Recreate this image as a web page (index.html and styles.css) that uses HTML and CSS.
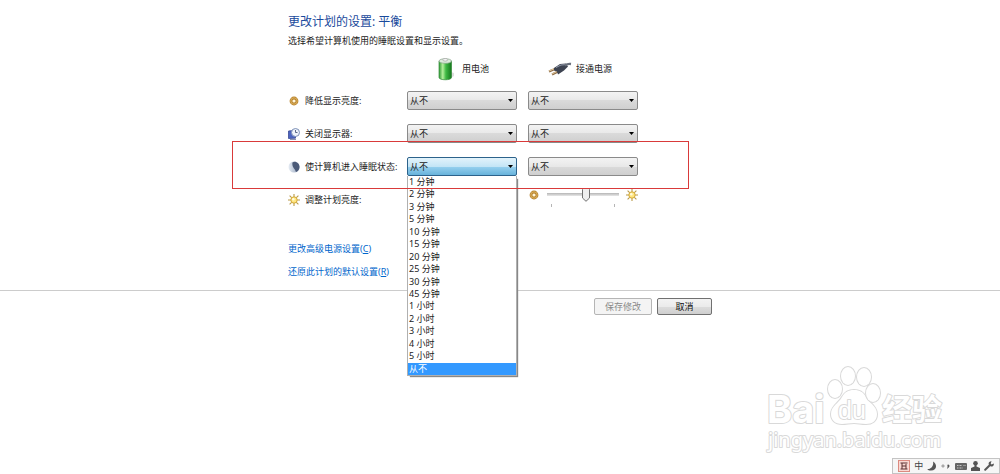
FILE: index.html
```html
<!DOCTYPE html>
<html lang="zh-CN">
<head>
	<meta charset="utf-8">
	<meta name="viewport" content="width=device-width, initial-scale=1">
	<title>更改计划的设置</title>
	<link rel="stylesheet" href="styles.css">
</head>
<body>
	<!--公用图标-->
	<svg class="defs" aria-hidden="true">
		<defs>
			<linearGradient id="green" x1="0" x2="1">
				<stop offset="0" stop-color="#2f9a35"/>
				<stop offset=".3" stop-color="#b4f09c"/>
				<stop offset=".55" stop-color="#3fb944"/>
				<stop offset="1" stop-color="#14761c"/>
			</linearGradient>
			<linearGradient id="moonFill" x1="0" x2="1">
				<stop offset="0" stop-color="#e6ecf4"/>
				<stop offset="1" stop-color="#93a3bb"/>
			</linearGradient>
			<symbol id="dim" viewBox="0 0 10 10">
				<circle cx="5" cy="5" r="3" fill="#fff6da" stroke="#b8842f" stroke-width="2.8"/>
				<circle cx="5" cy="5" r="3.2" fill="none" stroke="#e5bb68" stroke-width=".8"/>
			</symbol>
			<symbol id="sun" viewBox="0 0 12 12">
				<path d="M6 0v12M0 6h12M1.6 1.6l8.8 8.8M10.4 1.6l-8.8 8.8" stroke="#b99a48" stroke-width="1.1"/>
				<circle cx="6" cy="6" r="3.2" fill="#ffe680" stroke="#d3a93b"/>
				<circle cx="5.3" cy="5.3" r="1.2" fill="#fffbe0"/>
			</symbol>
		</defs>
	</svg>

	<main class="content">
		<h1>更改计划的设置: 平衡</h1>
		<p class="intro">选择希望计算机使用的睡眠设置和显示设置。</p>

		<div class="row head">
			<div class="source battery">
				<svg width="18" height="24" viewBox="0 0 18 24">
					<path d="M12 22l5-3v-3l-3-1z" fill="#ddd"/>
					<path d="M2 4v16.500c0 3 12.500 3 12.500 0V4z" fill="url(#green)" stroke="#348a3a" stroke-width=".7"/>
					<ellipse cx="8.250" cy="4" rx="6.200" ry="2.300" fill="#dcebdc" stroke="#8aa58c" stroke-width=".7"/>
					<ellipse cx="8.250" cy="2.800" rx="2.500" ry="1.300" fill="#f5f5f5" stroke="#999" stroke-width=".6"/>
				</svg>
				<span>用电池</span>
			</div>
			<div class="source plug">
				<svg width="24" height="16" viewBox="0 0 24 16">
					<path d="M1 10.500l7-3M4 13.500l6-3" stroke="#8d6b45" stroke-width="2.200"/>
					<path d="M1 10l6-2.500M4 13l6-3" stroke="#ead2a6" stroke-width=".9"/>
					<path d="M6 7l6-4 6-.5 2 3-4 4-6 4-1-3-3-1z" fill="#3d4351"/>
					<path d="M8 6.500l5-2.500 4-.3" fill="none" stroke="#98a0b0"/>
					<path d="M17 4.500c2-1.500 3-2 6-1.500" fill="none" stroke="#6a707c" stroke-width="2.400"/>
				</svg>
				<span>接通电源</span>
			</div>
		</div>

		<div class="row">
			<div class="label">
				<svg width="12" height="12"><use href="#dim" x="1" y="1" width="10" height="10"/></svg>
				<label for="dimBattery">降低显示亮度:</label>
			</div>
			<select id="dimBattery"><option>从不</option></select>
			<select aria-label="降低显示亮度 接通电源"><option>从不</option></select>
		</div>

		<div class="row">
			<div class="label">
				<svg width="12" height="12" viewBox="0 0 12 12">
					<path d="M.5 3l7-.8v8l-7 .3z" fill="#4c64c0" stroke="#3a4a94" stroke-width=".8"/>
					<path d="M2 11.500h6" stroke="#8b93ad"/>
					<circle cx="7.500" cy="4.500" r="4" fill="#eef3fb" stroke="#7d8fb5"/>
					<path d="M7.500 2v2.500h2" fill="none" stroke="#4a5878" stroke-width=".9"/>
				</svg>
				<label for="offBattery">关闭显示器:</label>
			</div>
			<select id="offBattery"><option>从不</option></select>
			<select aria-label="关闭显示器 接通电源"><option>从不</option></select>
		</div>

		<div class="row marked">
			<div class="label">
				<svg width="12" height="12" viewBox="0 0 12 12">
					<circle cx="6" cy="6" r="5.500" fill="url(#moonFill)"/>
					<path d="M4.500 1.500c3-2 7 .8 7 4.500 0 3-2 4.800-3.500 5C7.500 8 3.500 6 4.500 1.500z" fill="#4b5a78"/>
				</svg>
				<label for="sleepBattery">使计算机进入睡眠状态:</label>
			</div>
			<div class="dropdown">
				<select id="sleepBattery" class="open"><option>从不</option></select>
				<ul class="options" role="listbox" aria-label="使计算机进入睡眠状态">
					<li role="option">1 分钟</li>
					<li role="option">2 分钟</li>
					<li role="option">3 分钟</li>
					<li role="option">5 分钟</li>
					<li role="option">10 分钟</li>
					<li role="option">15 分钟</li>
					<li role="option">20 分钟</li>
					<li role="option">25 分钟</li>
					<li role="option">30 分钟</li>
					<li role="option">45 分钟</li>
					<li role="option">1 小时</li>
					<li role="option">2 小时</li>
					<li role="option">3 小时</li>
					<li role="option">4 小时</li>
					<li role="option">5 小时</li>
					<li role="option" class="selected" aria-selected="true">从不</li>
				</ul>
			</div>
			<select aria-label="使计算机进入睡眠状态 接通电源"><option>从不</option></select>
		</div>

		<div class="row">
			<div class="label">
				<svg width="12" height="12"><use href="#sun" width="12" height="12"/></svg>
				<label for="brightness">调整计划亮度:</label>
			</div>
			<div class="brightness">
				<svg width="12" height="12"><use href="#dim" x="1" y="1" width="10" height="10"/></svg>
				<div class="slider">
					<input type="range" id="brightness" min="0" max="100" value="55">
					<div class="ticks"></div>
				</div>
				<svg width="12" height="12"><use href="#sun" width="12" height="12"/></svg>
			</div>
		</div>

		<ul class="links">
			<li><a href="#">更改高级电源设置(<u>C</u>)</a></li>
			<li><a href="#">还原此计划的默认设置(<u>R</u>)</a></li>
		</ul>
	</main>

	<footer>
		<div class="buttons">
			<button type="button" class="save" disabled>保存修改</button>
			<button type="button">取消</button>
		</div>
	</footer>

	<!--水印-->
	<svg class="watermark" width="184" height="92" viewBox="0 0 184 92">
		<g fill="#fff" stroke="#d9d9d9" stroke-width="2" paint-order="stroke" stroke-linejoin="round">
			<text class="wm-bai" x="2" y="61">Bai</text>
			<path d="M89 28c6 0 9 2 12 7 3 6 11 9 11 17 0 7-5 10-11 10-5 0-8-1-12-1s-8 1-12 1c-7 0-11-4-11-10 0-8 8-11 11-17 3-5 6-7 12-7z"/>
			<ellipse cx="70" cy="27" rx="7" ry="9"/>
			<ellipse cx="83" cy="14" rx="7" ry="9"/>
			<ellipse cx="99" cy="15" rx="7" ry="9"/>
			<ellipse cx="108" cy="31" rx="7" ry="9"/>
			<text class="wm-du" x="73" y="57">du</text>
			<text class="wm-cn" x="117" y="58">经验</text>
			<text class="wm-url" x="3" y="85">jingyan.baidu.com</text>
		</g>
	</svg>

	<!--输入法工具条-->
	<div class="ime">
		<svg width="12" height="12" viewBox="0 0 12 12">
			<rect x=".5" y=".5" width="11" height="11" fill="#f9d9d3" stroke="#dc8a80"/>
			<path d="M2.500 3h7M4 3v6M2.500 9h7M4 6h4M8 4v5" fill="none" stroke="#5b3030"/>
		</svg>
		<span>中</span>
		<svg width="10" height="10" viewBox="0 0 10 10"><path d="M6 .5c5 3 3.500 9-2 9C2 9.500 1 9 .3 8 4 8.200 7 5 6 .5z" fill="#555"/></svg>
		<svg width="9" height="8" viewBox="0 0 9 8"><circle cx="2" cy="4" r="1.100" fill="none" stroke="#777" stroke-width=".8"/><path d="M6.500 3h1.500v1.500L6.500 6.500" fill="#555" stroke="#555" stroke-width=".7"/></svg>
		<svg width="12" height="8" viewBox="0 0 12 8"><rect y="1" width="12" height="7" rx="1" fill="#666"/><path d="M2 3.500h5M2 6h6M8.500 3.500h2" stroke="#ddd" stroke-width=".8" stroke-dasharray="1 .5"/></svg>
		<svg width="9" height="10" viewBox="0 0 9 10"><circle cx="4.500" cy="2.300" r="2.300" fill="#555"/><path d="M3.500 4h2v1.500L9 7v3H0V7l3.500-1.500z" fill="#555"/></svg>
		<svg width="10" height="10" viewBox="0 0 10 10"><path d="M1.200 8.800L6 4" stroke="#555" stroke-width="2" stroke-linecap="round"/><path d="M7.500.3L6.700 2.500l.8.900 2.300-.8c.4 2-1.300 3.200-3 2.900L4.600 3.300C4.400 1.500 5.700.1 7.500.3z" fill="#555"/></svg>
	</div>
</body>
</html>
```

FILE: styles.css
```css
* {
	box-sizing: border-box;
}

body,h1,p,ul {
	margin: 0;
	padding: 0;
}

ul {
	list-style: none;
}

body {
	position: relative;
	min-height: 100vh;
	background: #fff;
	color: #222;
	font-family: "Noto Sans", "Noto Sans CJK SC", sans-serif;
	font-size: 9px;
	line-height: 12px;
}

svg {
	display: block;
	flex: none;
}

.defs {
	position: absolute;
	width: 0;
	height: 0;
}

.content {
	max-width: 424px;
	margin: 0 auto;
	padding-top: 14px;
}

h1 {
	color: #1a4a9c;
	font-size: 12px;
	font-weight: 400;
	line-height: 16px;
}

.intro {
	margin-top: 3px;
	line-height: 16px;
}

/* 设置行 */
.row {
	display: grid;
	grid-template-columns: 108px 110px 110px;
	column-gap: 11px;
	align-items: center;
	height: 33px;
}

.head {
	height: 24px;
	margin: 8px 0 3px;
}

.source {
	display: flex;
	align-items: center;
}

.battery {
	grid-column: 2;
	gap: 7px;
	padding-left: 30px;
}

.plug {
	gap: 4px;
	padding-left: 20px;
}

.label {
	display: flex;
	align-items: center;
	gap: 5px;
	white-space: nowrap;
}

select {
	appearance: none;
	width: 100%;
	height: 19px;
	padding: 0 2px;
	border: 1px solid #8a8a8a;
	border-radius: 2px;
	background: url("data:image/svg+xml,%3Csvg xmlns='http://www.w3.org/2000/svg' width='5' height='3'%3E%3Cpath d='M0 0h5L2.500 3z'/%3E%3C/svg%3E") no-repeat right 3px center, linear-gradient(#f3f3f3, #e8e8e8 50%, #dadada 50%, #cfcfcf);
	color: #222;
	font: inherit;
}

select.open {
	border-color: #2c628b;
	background: url("data:image/svg+xml,%3Csvg xmlns='http://www.w3.org/2000/svg' width='5' height='3'%3E%3Cpath d='M0 0h5L2.500 3z'/%3E%3C/svg%3E") no-repeat right 3px center, linear-gradient(#e3f3fb, #c4e5f6 50%, #98d1ef 50%, #68b3db);
}

.dropdown {
	position: relative;
	display: flex;
}

.options {
	position: absolute;
	z-index: 2;
	top: 100%;
	left: 0;
	display: flex;
	flex-direction: column;
	width: 100%;
	height: 200px;
	border: 1px solid #b0b0b0;
	border-top: 0;
	background: #fff;
	box-shadow: 2px 2px 1px -1px #888;
	color: #222;
}

.options li {
	flex: 1;
	padding-left: 1px;
}

.options .selected {
	background: #3399ff;
	color: #fff;
}

/* 红色标注框 */
.marked {
	position: relative;
}

.marked::after {
	content: "";
	position: absolute;
	z-index: 3;
	top: -9px;
	bottom: -6px;
	left: -56px;
	right: 23px;
	border: 1px solid #d93a3a;
	pointer-events: none;
}

.brightness {
	grid-column: 3;
	display: flex;
	justify-content: space-between;
	align-items: flex-start;
}

.slider {
	width: 72px;
}

input[type=range] {
	appearance: none;
	display: block;
	width: 100%;
	height: 12px;
	margin: 0;
	background: linear-gradient(#b5b5b5, #e8e8e8) no-repeat center / 100% 3px;
}

input[type=range]::-webkit-slider-thumb {
	appearance: none;
	width: 8px;
	height: 14px;
	background: url("data:image/svg+xml,%3Csvg xmlns='http://www.w3.org/2000/svg' width='8' height='14'%3E%3Cpath d='M.5 1.500q0-1 1-1h5q1 0 1 1V10L4 13.300.5 10z' fill='%23eee' stroke='%23707070'/%3E%3C/svg%3E") no-repeat;
}

.ticks {
	height: 3px;
	margin: 3px 4px 4px;
	border: solid #b5b5b5;
	border-width: 0 1px;
}

.links {
	margin-top: 21px;
	line-height: 23px;
}

a {
	color: #0066cc;
	text-decoration: none;
}

footer {
	margin-top: 7px;
	padding-top: 7px;
	border-top: 1px solid #ccc;
}

.buttons {
	display: flex;
	justify-content: flex-end;
	gap: 5px;
	max-width: 424px;
	margin: 0 auto;
}

button {
	width: 55px;
	height: 17px;
	padding: 0;
	border: 1px solid #707070;
	border-radius: 2px;
	background: linear-gradient(#f3f3f3, #ebebeb 50%, #dddddd 50%, #cfcfcf);
	color: #111;
	font: inherit;
	line-height: 12px;
}

.save {
	width: 58px;
}

button:disabled {
	border-color: #b5b5b5;
	background: #f4f4f4;
	color: #8a8a8a;
}

.watermark {
	position: absolute;
	right: 51px;
	bottom: 20px;
}

.wm-bai {
	font: bold 38px Inter, sans-serif;
}

.wm-du {
	font: 25px "Liberation Sans", sans-serif;
}

.wm-cn {
	font: bold 30px "Noto Sans CJK SC", sans-serif;
}

.wm-url {
	font: 20px "Noto Sans", sans-serif;
}

.ime {
	position: absolute;
	right: 0;
	bottom: 0;
	display: flex;
	align-items: center;
	justify-content: space-between;
	width: 108px;
	height: 16px;
	padding: 0 5px;
	border: 1px solid #c4c4c4;
	background: #f6f6f6;
	color: #444;
}
```
